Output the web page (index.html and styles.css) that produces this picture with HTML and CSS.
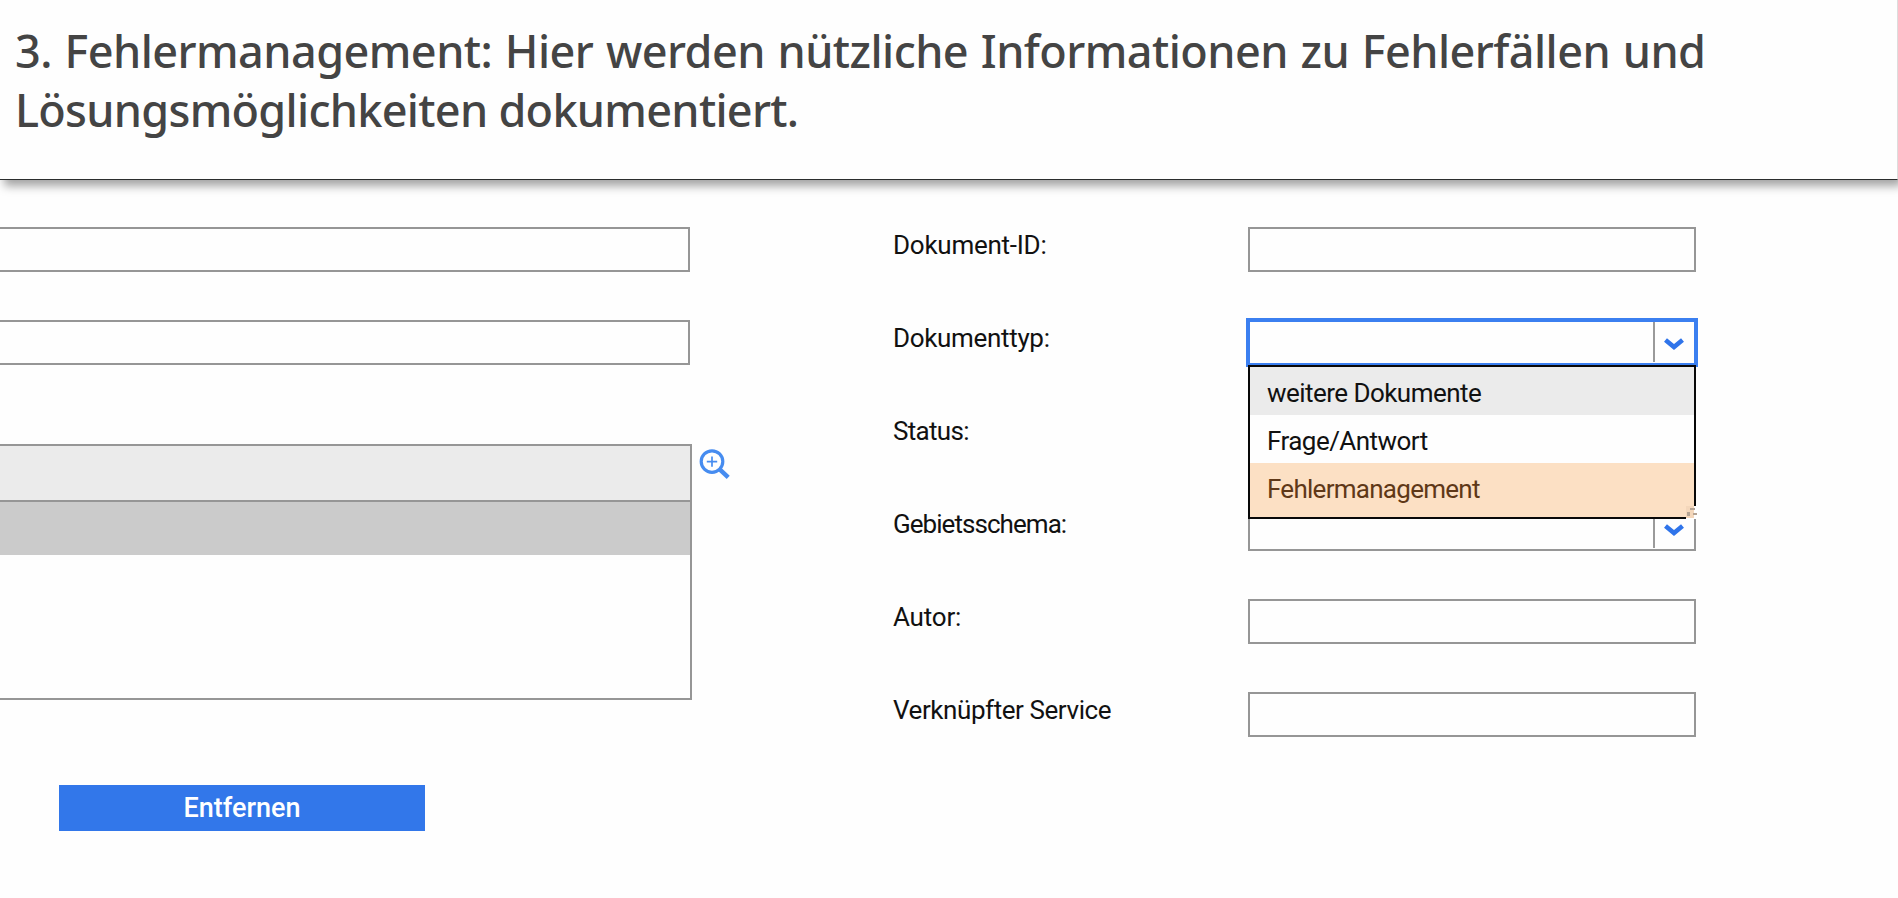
FILE: index.html
```html
<!DOCTYPE html>
<html lang="de">
<head>
<meta charset="utf-8">
<title>Fehlermanagement</title>
<link rel="stylesheet" href="styles.css">
</head>
<body>
<header class="banner">
  <p class="banner-text"><span class="line line-one">3. Fehlermanagement: Hier werden nützliche Informationen zu Fehlerfällen und</span><br><span class="line line-two">Lösungsmöglichkeiten dokumentiert.</span></p>
</header>
<main class="content">
  <section class="left">
    <div class="field field-left"></div>
    <div class="field field-left"></div>
    <div class="table-row">
      <div class="table">
        <div class="table-head"></div>
        <div class="table-selected"></div>
      </div>
      <svg class="zoom-icon" width="34" height="34" viewBox="0 0 34 34" fill="none" stroke="#468cf0">
        <circle cx="14" cy="13.6" r="10.8" stroke-width="3.2"/>
        <path d="M22 21.6L30.2 29.4" stroke-width="4.4"/>
        <path d="M14 8.4v10.4M8.8 13.6h10.4" stroke-width="1.7"/>
      </svg>
    </div>
    <button class="button" type="button"><span>Entfernen</span></button>
  </section>
  <section class="form">
    <div class="row"><label class="label l1">Dokument-ID:</label><div class="field"></div></div>
    <div class="row"><label class="label l2">Dokumenttyp:</label>
      <div class="field select open">
        <span class="arrow"><svg width="20" height="12" viewBox="0 0 20 12"><path d="M1.5 2L10 9L18.5 2" fill="none" stroke="#2f74ea" stroke-width="4.6"/></svg></span>
        <ul class="menu">
          <li class="option hover"><span class="o1">weitere Dokumente</span></li>
          <li class="option"><span class="o2">Frage/Antwort</span></li>
          <li class="option marked"><span class="o3">Fehlermanagement</span></li>
        </ul>
        <svg class="grip" width="12" height="13" viewBox="0 0 12 13"><path d="M0 0h12v13H0z" fill="#fff"/><path d="M0 0h8v12H0z" fill="#f4d7bb"/><path d="M4 2h5v2H4zM1 6h3v4H1zM7 7h4v2H7z" fill="#b5a494"/></svg>
      </div>
    </div>
    <div class="row"><label class="label l3">Status:</label><div class="field"></div></div>
    <div class="row"><label class="label l4">Gebietsschema:</label>
      <div class="field select">
        <span class="arrow"><svg width="20" height="12" viewBox="0 0 20 12"><path d="M1.5 2L10 9L18.5 2" fill="none" stroke="#2f74ea" stroke-width="4.6"/></svg></span>
      </div>
    </div>
    <div class="row"><label class="label l5">Autor:</label><div class="field"></div></div>
    <div class="row"><label class="label l6">Verknüpfter Service</label><div class="field"></div></div>
  </section>
</main>
</body>
</html>
```
FILE: styles.css
```css
* { box-sizing: border-box; }
body {
  margin: 0;
  width: 1898px;
  height: 898px;
  overflow: hidden;
  background: #fefefe;
  font-family: Roboto, sans-serif;
  color: #111;
}
.banner {
  height: 180px;
  padding: 21px 0 0 15px;
  background: #fefefe;
  border-bottom: 1px solid #2b2d2d;
  border-right: 1px solid #ddd;
  box-shadow: 4px 6px 9px rgba(0, 0, 0, 0.36);
}
.banner-text {
  margin: 0;
  font-family: "Noto Sans", sans-serif;
  font-size: 45px;
  font-weight: 500;
  line-height: 59px;
  color: #444;
  white-space: nowrap;
}
.line-one { letter-spacing: -0.55px; word-spacing: 1.5px; }
.line-two { letter-spacing: -0.71px; }
.content { display: flex; }
.left { width: 740px; padding-top: 47px; }
.field {
  width: 448px;
  height: 45px;
  background: #fefefe;
  border: 2px solid #969696;
}
.field-left { width: 690px; border-left: 0; margin-bottom: 48px; }
.table-row { display: flex; margin-top: 79px; }
.table {
  width: 692px;
  height: 256px;
  border: 2px solid #969696;
  border-left: 0;
}
.table-head { height: 56px; background: #ebebeb; border-bottom: 2px solid #969696; }
.table-selected { height: 53px; background: #cbcbcb; }
.zoom-icon { margin: 4px 0 0 6px; }
.button {
  display: block;
  width: 366px;
  height: 46px;
  margin: 85px 0 0 59px;
  padding: 1px 0 0;
  border: 0;
  background: #3277ea;
  color: #fff;
  font: 500 27px/45px Roboto, sans-serif;
}
.form { width: 1100px; padding: 47px 0 0 153px; }
.row { display: flex; height: 93.1px; }
.label {
  width: 355px;
  line-height: 37px;
  font-size: 26px;
  white-space: nowrap;
}
.l1 { letter-spacing: -0.25px; }
.l2 { letter-spacing: -0.33px; }
.l3 { letter-spacing: -0.7px; }
.l4 { letter-spacing: -0.95px; }
.l5 { letter-spacing: -0.2px; }
.l6 { letter-spacing: -0.43px; }
.o1, .o2 { letter-spacing: -0.54px; }
.o3 { letter-spacing: -0.73px; }
.select { position: relative; display: flex; justify-content: flex-end; }
.arrow {
  width: 41px;
  height: 40px;
  padding: 16px 0 0 9px;
  border-left: 2px solid #9a9a9a;
}
.arrow svg { display: block; }
.open { border-color: #3b7ff0; box-shadow: 0 0 0 2px #3b7ff0; }
.menu {
  position: absolute;
  z-index: 1;
  left: -2px;
  top: 43px;
  width: 448px;
  height: 154px;
  margin: 0;
  padding: 0;
  list-style: none;
  background: #fefefe;
  border: 2px solid #080808;
}
.option {
  height: 48px;
  padding-left: 17px;
  font-size: 26px;
  line-height: 52px;
  white-space: nowrap;
}
.hover { background: #ebebeb; }
.marked { height: 54px; background: #fce0c4; color: #5f3818; }
.grip { position: absolute; z-index: 2; left: 436px; top: 184px; }
```
